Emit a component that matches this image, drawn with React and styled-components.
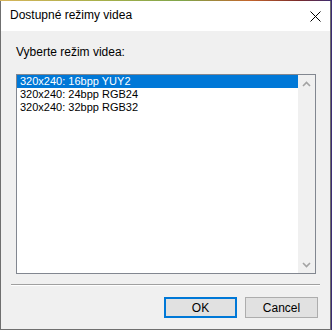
import React from "react";
import styled, { createGlobalStyle } from "styled-components";

const GlobalStyle = createGlobalStyle`
  html, body {
    margin: 0;
    padding: 0;
  }
  body {
    width: 332px;
    height: 330px;
    overflow: hidden;
    background:
      linear-gradient(to right, #d6b45a 0%, #a8b04a 30%, #7fa54a 55%, #c4662c 75%, #7a2a2a 90%, #3b2c73 100%) 0 0 / 100% 1px no-repeat,
      #3b2c73;
    font-family: "Liberation Sans", Arial, sans-serif;
  }
`;

const Window = styled.div`
  box-sizing: border-box;
  margin-top: 1px;
  width: 331px;
  height: 329px;
  border: 1px solid #6f6f6f;
  border-top: none;
  display: flex;
  flex-direction: column;
  background: #f0f0f0;
`;

const TitleBar = styled.div`
  height: 30px;
  background: #ffffff;
  display: flex;
  align-items: center;
  justify-content: space-between;
  padding-left: 9px;
  padding-right: 8px;
`;

const Title = styled.span`
  font-size: 12px;
  color: #000;
  line-height: 15px;
  margin-top: -1px;
`;

const CloseButton = styled.div`
  width: 14px;
  height: 14px;
  display: flex;
  align-items: center;
  justify-content: center;
`;

const Body = styled.div`
  flex: 1;
  display: flex;
  flex-direction: column;
  padding-top: 14px;
`;

const Label = styled.div`
  font-size: 12px;
  line-height: 15px;
  color: #000;
  padding-left: 15px;
`;

const ListBox = styled.div`
  box-sizing: border-box;
  margin: 14px 0 0 15px;
  width: 300px;
  height: 200px;
  border: 1px solid #828790;
  background: #fff;
  display: flex;
`;

const Items = styled.div`
  flex: 1;
  display: flex;
  flex-direction: column;
`;

const Item = styled.div`
  height: 13px;
  line-height: 13px;
  font-size: 11px;
  padding-left: 3px;
  white-space: nowrap;
  color: ${({ $selected }) => ($selected ? "#fff" : "#000")};
  background: ${({ $selected }) => ($selected ? "#0078d7" : "transparent")};
`;

const ScrollBar = styled.div`
  width: 17px;
  background: #f0f0f0;
  display: flex;
  flex-direction: column;
  justify-content: space-between;
`;

const ScrollArrow = styled.div`
  height: 17px;
  display: flex;
  align-items: center;
  justify-content: center;
`;

const Separator = styled.div`
  margin: 10px 10px 0 10px;
  height: 1px;
  background: #a0a0a0;
  border-bottom: 1px solid #ffffff;
`;

const ButtonRow = styled.div`
  display: flex;
  justify-content: flex-end;
  gap: 8px;
  padding: 11px 12px 0 0;
`;

const Button = styled.button`
  box-sizing: border-box;
  width: 73px;
  height: 21px;
  padding: 0;
  font-family: "Liberation Sans", Arial, sans-serif;
  font-size: 12px;
  color: #000;
  background: #e1e1e1;
  border: ${({ $default }) => ($default ? "2px solid #0078d7" : "1px solid #adadad")};
  outline: none;
`;

const modes = ["320x240: 16bpp YUY2", "320x240: 24bpp RGB24", "320x240: 32bpp RGB32"];

function Chevron({ up }) {
  return (
    <svg width="9" height="6" viewBox="0 0 9 6">
      <path
        d={up ? "M1 5 L4.5 1.5 L8 5" : "M1 1 L4.5 4.5 L8 1"}
        fill="none"
        stroke="#a3a3a3"
        strokeWidth="1.6"
      />
    </svg>
  );
}

export default function App() {
  return (
    <>
      <GlobalStyle />
      <Window>
        <TitleBar>
          <Title>Dostupné režimy videa</Title>
          <CloseButton>
            <svg width="11" height="11" viewBox="0 0 11 11">
              <path d="M0.5 0.5 L10.5 10.5 M10.5 0.5 L0.5 10.5" stroke="#000" strokeWidth="1" />
            </svg>
          </CloseButton>
        </TitleBar>
        <Body>
          <Label>Vyberte režim videa:</Label>
          <ListBox>
            <Items>
              {modes.map((m, i) => (
                <Item key={m} $selected={i === 0}>{m}</Item>
              ))}
            </Items>
            <ScrollBar>
              <ScrollArrow><Chevron up /></ScrollArrow>
              <ScrollArrow><Chevron /></ScrollArrow>
            </ScrollBar>
          </ListBox>
          <Separator />
          <ButtonRow>
            <Button $default>OK</Button>
            <Button>Cancel</Button>
          </ButtonRow>
        </Body>
      </Window>
    </>
  );
}
